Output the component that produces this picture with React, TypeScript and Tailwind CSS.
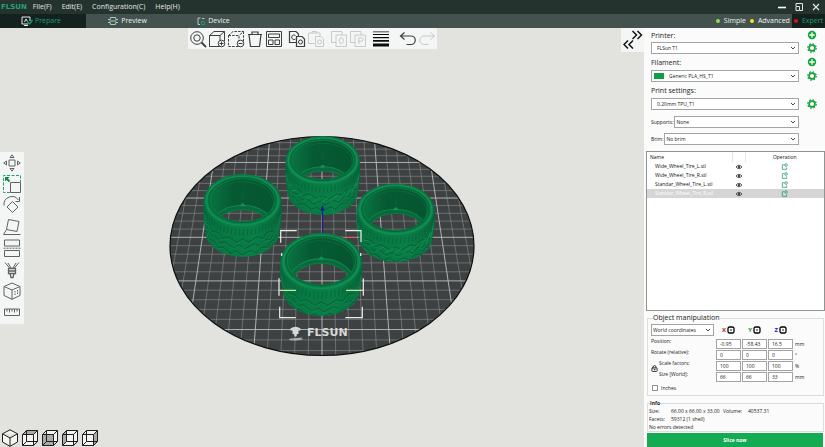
import React, { useState } from "react";
import { LuLockKeyhole } from "react-icons/lu";

type TireProps = {
    id: string;
    cx: number;
    top: number;
    rx: number;
    height: number;
    inner: number;
    holeTop: number;
    slanted?: boolean;
};

type SelectProps = {
    id: string;
    options: string[];
    label?: string;
    className?: string;
    swatch?: boolean;
};

const PLATE = { cx: 322, cy: 246, rx: 152, ry: 109.5 };

// vertical position of a grid row on the tilted bed, n counted in 50 mm steps
const rowY = (n: number) => 1 / (0.0012542 - 0.000065 * n) - 560;
const colX = (n: number, y: number) => PLATE.cx + n * (55.5 + 0.075 * (y - 180));

const gridPath = (bold: boolean) => {
    let d = "";
    for (let i = -15; i <= 15; i++) {
        if ((i % 5 === 0) !== bold) continue;
        const n = i / 5;
        const y = rowY(n).toFixed(2);
        d += `M160 ${y}H485`;
        d += `M${colX(n, 130).toFixed(2)} 130L${colX(n, 360).toFixed(2)} 360`;
    }
    return d;
};

const around = (deg: number, offset: number, ry: number) => {
    const a = (deg * Math.PI) / 180;
    const shrink = 1 - offset * 0.002;
    return `${(39 * shrink * Math.cos(a)).toFixed(2)} ${(ry - 27 + ry * Math.sin(a) + offset).toFixed(2)}`;
};

const sipes = (ry: number) => {
    let d = "";
    for (let a = 4; a <= 176; a += 6) d += `M${around(a, 1, ry)}L${around(a + 1, 7, ry)}`;
    return d;
};

const zigzag = (offset: number, phase: number, ry: number) => {
    let d = "";
    for (let a = 3 + phase, i = 0; a <= 177; a += i % 3 === 0 ? 14 : 9, i++) {
        d += `${i === 0 ? "M" : "L"}${around(a, offset + (i % 2 ? 3 : -0.6), ry)}`;
    }
    return d;
};

const slashes = (offset: number, phase: number, ry: number) => {
    let d = "";
    for (let a = 6 + phase; a <= 165; a += 14) {
        d += `M${around(a, offset, ry)}L${around(a + 5, offset + 2, ry)}L${around(a + 13, offset + 6, ry)}`;
    }
    return d;
};

const Tire = ({ id, cx, top, rx, height, inner, holeTop, slanted }: TireProps) => {
    const sy = height / 81;
    const outer = inner + 6;
    const rimY = outer - 27;
    const innerY = inner - 22;
    const holeRy = inner - 1.5;
    const bottomRy = outer - 2;
    const bottomY = 54 - bottomRy;
    const body = `M-39 ${rimY}A39 ${outer} 0 0 1 39 ${rimY}C39.5 10 39 20 37 ${bottomY}A37 ${bottomRy} 0 0 1 -37 ${bottomY}C-39 20 -39.5 10 -39 ${rimY}Z`;
    return (
        <g transform={`translate(${cx} ${top + 27 * sy}) scale(${rx / 39} ${sy})`}>
            <clipPath id={`${id}-inner`}>
                <ellipse cx="0" cy={innerY} rx="32" ry={inner} />
            </clipPath>
            <clipPath id={`${id}-body`}>
                <path d={body} />
            </clipPath>
            <mask id={`${id}-hole`} maskUnits="userSpaceOnUse" x="-45" y="-35" width="90" height="95">
                <rect x="-45" y="-35" width="90" height="95" fill="white" />
                <ellipse cx="0" cy={holeTop + holeRy} rx="28.5" ry={holeRy} fill="black" clipPath={`url(#${id}-inner)`} />
            </mask>
            <g mask={`url(#${id}-hole)`}>
                <path d={body} fill="url(#tireBody)" />
                <g clipPath={`url(#${id}-body)`} fill="none" strokeLinejoin="round">
                    <path d={sipes(outer)} stroke="#066339" strokeWidth="0.8" />
                    {[11, 17, 23].map((offset, i) => (
                        <g key={offset}>
                            <path d={zigzag(offset, i * 5, outer)} stroke="#066238" strokeWidth="1.1" />
                            <path d={zigzag(offset + 1.2, i * 5, outer)} stroke="#138a52" strokeWidth="0.7" />
                        </g>
                    ))}
                    <path
                        d={slashes(slanted ? 12 : 15, 4, outer)}
                        stroke={slanted ? "#1c945b" : "#0f8049"}
                        strokeWidth="0.8"
                    />
                </g>
                <ellipse cx="0" cy={rimY} rx="37.8" ry={outer - 1} fill="#098247" />
                <ellipse cx="0" cy={rimY - 0.3} rx="36" ry={outer - 2.6} fill="none" stroke="#138f55" strokeWidth="1.4" />
                <ellipse cx="0" cy={innerY} rx="33.6" ry={inner + 1.4} fill="none" stroke="#07663a" strokeWidth="1.4" />
                <ellipse cx="0" cy={innerY} rx="32" ry={inner} fill="url(#tireInner)" />
                <g clipPath={`url(#${id}-inner)`} fill="none">
                    <ellipse cx="0" cy={innerY + 2.5} rx="31" ry={inner} stroke="#0b7040" strokeWidth="0.8" />
                    <ellipse cx="0" cy={holeTop + holeRy - 3.5} rx="30.5" ry={holeRy + 1.5} fill="#086a3b" stroke="#128650" strokeWidth="1" />
                    <ellipse cx="0" cy={holeTop + holeRy} rx="29" ry={holeRy + 0.5} stroke="#0a7a44" strokeWidth="1.2" />
                    <path d="M-2.6 0L-1 -2.8H1.2L2.6 0Z" fill="#159056" transform={`translate(0 ${holeTop - 4})`} />
                    <path d="M0.5 -12V-3" stroke="#0a6c3d" strokeWidth="0.7" />
                </g>
            </g>
        </g>
    );
};

const Scene = () => (
    <svg viewBox="0 28 644 419" className="absolute inset-0 h-full w-full" aria-label="Build plate">
        <defs>
            <linearGradient id="tireBody" x1="0" x2="1" y1="0" y2="0">
                <stop offset="0" stopColor="#067040" />
                <stop offset="0.35" stopColor="#087a44" />
                <stop offset="0.65" stopColor="#0a7e47" />
                <stop offset="1" stopColor="#07693b" />
            </linearGradient>
            <linearGradient id="tireInner" x1="0" x2="1" y1="0" y2="0">
                <stop offset="0" stopColor="#087341" />
                <stop offset="0.35" stopColor="#065a33" />
                <stop offset="1" stopColor="#055630" />
            </linearGradient>
            <clipPath id="plate">
                <ellipse {...PLATE} />
            </clipPath>
        </defs>
        <ellipse {...PLATE} fill="#3e4141" />
        <g clipPath="url(#plate)" fill="none">
            <path d={gridPath(false)} stroke="#8b8e8e" strokeWidth="0.6" />
            <path d={gridPath(true)} stroke="#bcbebe" strokeWidth="0.9" />
        </g>
        <ellipse {...PLATE} fill="none" stroke="#0c0e0e" strokeWidth="1.2" />

        <g fill="#d5d8d7">
            <path d="M290.500 328.500Q295.500 325 300.500 328.500V330.500H298.500V334H297L296.500 336.500H294.500L294 334H292.500V330.500H290.500Z" />
            <path d="M289 338.800L303 337.600L301 339.300L304 339.600L296 340.600L290 340.200Z" opacity="0.7" />
            <text x="307" y="336" fontSize="11" fontWeight="bold" fontFamily="DejaVu Sans, sans-serif">
                FLSUN
            </text>
        </g>

        <Tire id="top" cx={322.7} top={136} rx={37.2} height={79} inner={19.5} holeTop={9.5} slanted />
        <Tire id="left" cx={242.5} top={174} rx={39} height={83} inner={20.5} holeTop={8.5} />
        <path d="M343 236.800H357" stroke="#b3262b" strokeWidth="1" />
        <Tire id="right" cx={395.7} top={183.5} rx={39} height={78.5} inner={21.5} holeTop={4.5} slanted />
        <path d="M322.500 237V208" stroke="#1a1a94" strokeWidth="1.2" />
        <path d="M322.500 205L320.500 210.500H324.500Z" fill="#1a1a94" />
        <Tire id="front" cx={321.3} top={233} rx={41} height={83} inner={22.5} holeTop={3} />

        <g fill="none" stroke="#eceeed" strokeWidth="1.2">
            <path d="M280.700 242.700V230.700H296.700M345.300 230.700H361V242" />
            <path d="M279 278.300V295.700M363.300 278.300V295.700" />
            <path d="M279.700 306.700V317.700H295.700M345.300 317.700H362.300V306.700" />
            <path d="M281.700 253V256M360.700 253V256" />
            <path d="M279 290.300H296M346 290.300H363.300" stroke="#c9e3a0" />
        </g>
    </svg>
);

const glyph = (children: React.ReactNode, size = "h-[18px] w-[18px]") => (
    <svg viewBox="0 0 18 18" className={size} fill="none" stroke="currentColor" strokeWidth="1" aria-hidden="true">
        {children}
    </svg>
);

const CUBE = "M1.500 5.500H12V16.500H1.500ZM1.500 5.500L6 1.500H16.500L12 5.500M16.500 1.500V11";

const toolGroups = [
    [
        {
            label: "Zoom",
            icon: glyph(
                <>
                    <circle cx="8" cy="8" r="6.300" />
                    <circle cx="8" cy="8" r="3.200" />
                    <path d="M12.500 12.500L17 17" strokeWidth="1.800" />
                </>
            ),
        },
        {
            label: "Add",
            icon: glyph(
                <>
                    <path d={CUBE} />
                    <circle cx="13.500" cy="13.500" r="3.300" fill="#f3f6f4" />
                    <path d="M11.500 13.500H15.500M13.500 11.500V15.500" />
                </>
            ),
        },
        {
            label: "Remove",
            icon: glyph(
                <>
                    <path d={CUBE} strokeDasharray="2.500 1.200" />
                    <circle cx="13.500" cy="13.500" r="3.300" fill="#f3f6f4" />
                    <path d="M11.500 13.500H15.500" />
                </>
            ),
        },
        {
            label: "Delete all",
            icon: glyph(<path d="M2 4.500H16M6 4.500V2H12V4.500M3 4.500L4.500 16.500H13.500L15 4.500" strokeWidth="1.200" />),
        },
        {
            label: "Arrange",
            icon: glyph(
                <>
                    <path d="M1.500 1.500H16.500V16.500H1.500Z" />
                    <path d="M3.500 4H14.500V7.500H3.500ZM3.500 10H8V14.500H3.500ZM10 10H14.500V14.500H10Z" />
                </>
            ),
        },
    ],
    [
        {
            label: "Copy",
            icon: glyph(
                <>
                    <path d="M9 12.500H1.500V1.500H8L10.500 4V6.500M8.500 6.500H14L16.500 9V16.500H8.500Z" strokeWidth="1.200" />
                    <path d="M7.500 5.500A2.300 2.300 0 1 0 7.500 9" />
                    <circle cx="12.500" cy="12" r="2" />
                </>
            ),
        },
        {
            label: "Paste",
            off: true,
            icon: glyph(
                <>
                    <path d="M7.500 13.500H1.500V3H13V6M5 3V1.500H9.500V3M8.500 6.500H14L16.500 9V16.500H8.500Z" />
                    <circle cx="12.500" cy="12" r="2" />
                </>
            ),
        },
    ],
    [
        {
            label: "Split to objects",
            off: true,
            icon: glyph(
                <>
                    <path d="M6 12.500H1.500V1.500H12V5M6 5H16.500V16.500H6Z" />
                    <ellipse cx="11.300" cy="10.700" rx="2" ry="3" />
                </>
            ),
        },
        {
            label: "Split to parts",
            off: true,
            icon: glyph(
                <>
                    <path d="M6 12.500H1.500V1.500H12V5M6 5H16.500V16.500H6Z" />
                    <path d="M9.800 14V7.800H12.500A1.700 1.700 0 0 1 12.500 11.200H9.800" />
                </>
            ),
        },
    ],
    [
        {
            label: "Variable layer height",
            icon: glyph(
                <g stroke="none" fill="#0b0d0c">
                    <path d="M1 1.500H17V2.200H1ZM1 4H17V5H1ZM1 7H17V8.300H1ZM1 10H17V11.800H1ZM1 13.500H17V16.500H1Z" />
                </g>
            ),
        },
    ],
    [
        {
            label: "Undo",
            icon: glyph(<path d="M5.500 2.500L1.500 6L5.500 9.500M1.500 6H12A4 4 0 0 1 12 14.500H7.500" strokeWidth="1.200" />),
        },
        {
            label: "Redo",
            off: true,
            icon: glyph(<path d="M12.500 2.500L16.500 6L12.500 9.500M16.500 6H6A4 4 0 0 0 6 14.500H10.500" />),
        },
    ],
];

const gizmos = [
    {
        label: "Move",
        icon: glyph(<path d="M6 6H12V12H6ZM9 0.800L11 3.500H7ZM9 17.200L11 14.500H7ZM0.800 9L3.500 7V11ZM17.200 9L14.500 7V11Z" />),
    },
    {
        label: "Scale",
        icon: glyph(
            <>
                <path d="M7 17.500H0.500V0.500H17.500V7" stroke="#22a06a" strokeDasharray="3 1.500" />
                <path d="M7.500 7.500H17.500V17.500H7.500Z" />
                <path d="M3 3L6.500 6.500" stroke="#0b8a4a" strokeWidth="2" />
                <path d="M2 2H6.500L2 6.500Z" fill="#0b8a4a" stroke="none" />
            </>
        ),
    },
    {
        label: "Rotate",
        icon: glyph(<path d="M9.500 5.500L15 11L9.500 16.500L4 11ZM1 9.500A8 8 0 0 1 15.500 4M16.500 1V5.500H12.500" />),
    },
    {
        label: "Place on face",
        icon: glyph(<path d="M5.500 1.500L16 3.500L14 13.500L3.500 11.500ZM0.500 16.500H17.500M3.500 11.500L0.500 16.500" />),
    },
    {
        label: "Cut",
        icon: glyph(
            <>
                <path d="M1.500 1H16.500V7H1.500ZM1.500 11.500H16.500V17.500H1.500Z" />
                <path d="M0.500 9.200H17.500" strokeDasharray="2 1" />
            </>
        ),
    },
    {
        label: "Paint supports",
        icon: glyph(
            <>
                <path d="M2 1.500L7 7.500M16 1.500L11 7.500M5 2L8 7M13 2L10 7" />
                <path d="M5.500 7.500H12.500V12.500H5.500ZM7 12.500L8 16.500H10L11 12.500M5.500 10H12.500" strokeWidth="1.300" />
            </>
        ),
    },
    {
        label: "Seam",
        icon: glyph(
            <>
                <path d="M9 1L17 4.500V13.500L9 17.300L1 13.500V4.500ZM1 4.500L9 8L17 4.500M9 8V17.300" />
                <path d="M12 9V14M14.500 8V12" strokeDasharray="1.500 1" />
            </>
        ),
    },
    {
        label: "Measure",
        icon: glyph(<path d="M1.500 6H16.500V12.500H1.500ZM4 6V8.500M6.500 6V9.500M9 6V8.500M11.500 6V9.500M14 6V8.500" />),
    },
];

const BOX = "M1.500 5.500H12.500V16.500H1.500ZM5.500 1.500H16.500V12.500H5.500ZM1.500 5.500L5.500 1.500M12.500 5.500L16.500 1.500M12.500 16.500L16.500 12.500M1.500 16.500L5.500 12.500";

const views = [
    { label: "Isometric view", face: "", lines: "M9 0.800L16.500 4.800V13L9 17.300L1.500 13V4.800ZM1.500 4.800L9 9L16.500 4.800M9 9V17.300" },
    { label: "Top view", face: "M1.500 5.500L5.500 1.500H16.500L12.500 5.500Z", lines: BOX },
    { label: "Front view", face: "M1.500 5.500H12.500V16.500H1.500Z", lines: BOX },
    { label: "Left view", face: "M1.500 5.500L5.500 1.500V12.500L1.500 16.500Z", lines: BOX },
    { label: "Right view", face: "M12.500 5.500L16.500 1.500V12.500L12.500 16.500Z", lines: BOX },
];

const GearButton = ({ label }: { label: string }) => (
    <button aria-label={label} className="text-[#12a33c]">
        <svg viewBox="0 0 10 10" className="h-[10px] w-[10px]" fill="none" stroke="currentColor" aria-hidden="true">
            <circle cx="5" cy="5" r="2.900" strokeWidth="1.600" />
            <circle cx="5" cy="5" r="4.200" strokeWidth="1.300" strokeDasharray="1.650 1.650" />
        </svg>
    </button>
);

const PlusButton = ({ label }: { label: string }) => (
    <button aria-label={label} className="text-[#12a33c]">
        <svg viewBox="0 0 10 10" className="h-[10px] w-[10px]" aria-hidden="true">
            <circle cx="5" cy="5" r="4.200" fill="currentColor" />
            <path d="M5 2.300V7.700M2.300 5H7.700" fill="none" stroke="white" strokeWidth="1.300" />
        </svg>
    </button>
);

const Select = ({ id, options, label, className = "", swatch }: SelectProps) => (
    <div className={`relative flex h-3 min-w-0 items-center border border-[#a3a5a4] bg-white ${className}`}>
        {swatch && <span className="ml-[2px] h-[6px] w-[10px] shrink-0 bg-[#0e9f45]" />}
        <select id={id} aria-label={label} className="h-full w-full appearance-none bg-transparent pl-[5px] text-[5px] leading-none text-[#222] outline-none">
            {options.map((option) => (
                <option key={option}>{option}</option>
            ))}
        </select>
        <svg viewBox="0 0 6 4" className="pointer-events-none absolute right-[2px] h-1 w-[6px]" fill="none" stroke="#333" strokeWidth="0.900">
            <path d="M1 1L3 3L5 1" />
        </svg>
    </div>
);

const menus = ["File(F)", "Edit(E)", "Configuration(C)", "Help(H)"];

const TitleBar = () => (
    <header className="flex h-[14px] shrink-0 items-center bg-[#25332f] pl-[1px] text-[7px] text-[#e4e8e6]">
        <span className="font-['DejaVu_Sans',sans-serif] font-bold text-[#24a173]">FLSUN</span>
        <nav className="ml-[6px] flex gap-[10px]">
            {menus.map((menu) => (
                <button key={menu}>{menu}</button>
            ))}
        </nav>
        <div className="ml-auto flex gap-[7px] pr-1">
            <button aria-label="Minimize">
                <svg viewBox="0 0 10 10" className="h-[10px] w-[10px]" stroke="white" strokeWidth="1.600"><path d="M1 5.500H9" /></svg>
            </button>
            <button aria-label="Restore">
                <svg viewBox="0 0 10 10" className="h-[10px] w-[10px]" fill="none" stroke="#e4e8e6"><path d="M2 4V1.500H8.500V8.500H6M2 4.500H5.500V8.500H2Z" /></svg>
            </button>
            <button aria-label="Close">
                <svg viewBox="0 0 10 10" className="h-[10px] w-[10px]" stroke="#e4e8e6" strokeWidth="1.200"><path d="M2 2L8 8M8 2L2 8" /></svg>
            </button>
        </div>
    </header>
);

const tabs = [
    {
        name: "Prepare",
        icon: (
            <svg viewBox="0 0 12 10" className="h-[10px] w-3" fill="none" stroke="#e4e8e6" aria-hidden="true">
                <path d="M9 5V1H1V8H7M3 9.500H7M3.500 6L5 3L6.500 5.500" />
                <path d="M6.500 6L8.500 8L11.500 4" stroke="#12a36b" strokeWidth="1.300" />
            </svg>
        ),
    },
    {
        name: "Preview",
        icon: (
            <svg viewBox="0 0 12 10" className="h-[10px] w-3" fill="none" stroke="#a9c9bd" aria-hidden="true">
                <path d="M3 4L3.500 1.500H8.500L9 4M1 3.500H3M9 3.500H11M2.500 5H9.500M1 6.500H3M9 6.500H11M3 6L3.500 8.500H8.500L9 6" />
            </svg>
        ),
    },
    {
        name: "Device",
        icon: (
            <svg viewBox="0 0 10 10" className="h-[10px] w-[10px]" fill="none" stroke="#b9c4c0" aria-hidden="true">
                <path d="M2 2H4.500M2 2V8.500H4M6 2.500H8.500" />
                <path d="M5.500 5.500H8.500V8.500H5.500Z" stroke="#109a72" />
            </svg>
        ),
    },
];

const modes = [
    { name: "Simple", dot: "bg-[#8be04e]" },
    { name: "Advanced", dot: "bg-[#f4e21c]" },
    { name: "Expert", dot: "bg-[#d31525]" },
];

const TabBar = () => {
    const [tab, setTab] = useState<string>("Prepare");
    const [mode, setMode] = useState<string>("Expert");
    return (
        <div className="flex h-[14px] shrink-0 bg-[#43524e] text-[7px] text-[#eef2f0]">
            {tabs.map(({ name, icon }) => (
                <button
                    key={name}
                    onClick={() => setTab(name)}
                    className={`flex w-[86px] items-center justify-center gap-[2px] pr-1 ${tab === name ? "bg-[#14211e] text-[#17a06c]" : ""}`}
                >
                    {icon}
                    {name}
                </button>
            ))}
            <div className="ml-auto flex">
                {modes.map(({ name, dot }) => (
                    <button
                        key={name}
                        onClick={() => setMode(name)}
                        className={`flex items-center gap-1 px-[2px] ${mode === name ? "bg-[#14211e] text-[#17a06c]" : ""}`}
                    >
                        <span className={`h-1 w-1 rounded-full ${dot}`} />
                        {name}
                    </button>
                ))}
            </div>
        </div>
    );
};

const Viewport = () => (
    <main className="relative flex min-w-0 flex-1 flex-col bg-[#e2e3de]">
        <Scene />
        <div className="absolute inset-x-0 top-0 flex justify-center pr-5">
            <div className="flex h-[21px] items-center gap-[5px] bg-[#f3f6f4] px-[1px]">
                {toolGroups.map((group, i) => (
                    <div key={i} className={`flex gap-[1px] ${i === toolGroups.length - 1 ? "pl-1" : ""}`}>
                        {group.map((tool) => (
                            <button key={tool.label} aria-label={tool.label} className={tool.off ? "text-[#c6cac8]" : "text-[#3b403e]"}>
                                {tool.icon}
                            </button>
                        ))}
                    </div>
                ))}
            </div>
        </div>
        <button aria-label="Collapse sidebar" className="absolute top-0 right-0 h-6 w-[23px] bg-[#f3f6f4]">
            <svg viewBox="0 0 23 24" className="h-6 w-[23px]" fill="none" stroke="#0b0d0c" strokeWidth="1.400" aria-hidden="true">
                <path d="M11.500 3L15.500 7L11.500 11M16.500 3L20.500 7L16.500 11M7 12.500L3 16.500L7 20.500M12 12.500L8 16.500L12 20.500" />
            </svg>
        </button>
        <div className="absolute inset-y-0 left-0 flex items-center">
            <div className="flex h-[172px] w-6 flex-col items-center justify-between bg-[#f3f6f4] py-[1px] text-[#5f6462]">
                {gizmos.map((gizmo) => (
                    <button key={gizmo.label} aria-label={gizmo.label} className="flex h-5 items-center">
                        {gizmo.icon}
                    </button>
                ))}
            </div>
        </div>
        <div className="absolute bottom-0 left-0 flex gap-[2px] pl-[1px]">
            {views.map((view) => (
                <button key={view.label} aria-label={view.label} className="text-[#1c1f1e]">
                    {glyph(
                        <>
                            <path d={view.lines} fill="#f4f5f1" stroke="none" />
                            {view.face && <path d={view.face} fill="#a9acaa" stroke="none" />}
                            <path d={view.lines} />
                        </>
                    )}
                </button>
            ))}
        </div>
    </main>
);

const presets = [
    { id: "printer", label: "Printer:", value: "FLSun T1", add: true },
    { id: "filament", label: "Filament:", value: "Generic PLA_HS_T1", add: true, swatch: true },
    { id: "print", label: "Print settings:", value: "0.20mm TPU_T1", add: false },
];

const files = ["Wide_Wheel_Tire_L.stl", "Wide_Wheel_Tire_R.stl", "Standar_Wheel_Tire_L.stl", "Standar_Wheel_Tire_R.stl"];

const ObjectList = () => {
    const [selected, setSelected] = useState<string>(files[3]);
    return (
        <div className="mt-[6px] ml-[2px] min-h-0 flex-1 border border-[#8f9391] bg-white">
            <table className="w-full table-fixed border-collapse text-[5px] leading-none text-[#111]">
                <thead>
                    <tr className="h-[10px]">
                        <th className="w-[85px] pl-[3px] text-left font-normal">Name</th>
                        <th className="w-[13px] border-x border-[#e3e5e4]" aria-label="Visible" />
                        <th className="font-normal">Operation</th>
                    </tr>
                </thead>
                <tbody>
                    {files.map((file) => (
                        <tr
                            key={file}
                            onClick={() => setSelected(file)}
                            className={selected === file ? "bg-[#d5d5d5] text-white" : ""}
                        >
                            <td className="h-[9px] pl-2">{file}</td>
                            <td className="p-0">
                                <svg viewBox="0 0 8 6" className="mx-auto h-[6px] w-2" fill="none" stroke="#333" strokeWidth="0.800">
                                    <path d="M1 3Q4 -0.500 7 3Q4 6.500 1 3Z" />
                                    <circle cx="4" cy="3" r="0.900" fill="#333" />
                                </svg>
                            </td>
                            <td className="p-0">
                                <svg viewBox="0 0 8 8" className="mx-auto h-[7px] w-[7px]" fill="none" stroke="#2b9c74" strokeWidth="0.900">
                                    <path d="M4 2H1.500V7.200H6.500V5" />
                                    <circle cx="5.800" cy="2.300" r="1.500" />
                                </svg>
                            </td>
                        </tr>
                    ))}
                </tbody>
            </table>
        </div>
    );
};

const axes = [
    { name: "X", color: "text-[#c01818]" },
    { name: "Y", color: "text-[#1c9a1c]" },
    { name: "Z", color: "text-[#1a1aa8]" },
];

const transforms = [
    { label: "Position:", values: ["-0.95", "-58.43", "16.5"], unit: "mm" },
    { label: "Rotate (relative):", values: ["0", "0", "0"], unit: "°" },
    { label: "Scale factors:", values: ["100", "100", "100"], unit: "%", nested: true },
    { label: "Size [World]:", values: ["66", "66", "33"], unit: "mm", nested: true },
];

const Manipulation = () => (
    <fieldset className="mt-[3px] mr-[1px] ml-[3px] border border-[#dcdedd] px-[3px] pb-1">
        <legend className="ml-[2px] text-[7px] leading-[8px]">Object manipulation</legend>
        <div className="mt-[2px] grid grid-cols-[1fr_25px_25px_25px_26px] items-center gap-x-[1px]">
            <Select id="coords" label="Coordinate system" options={["World coordinates"]} className="mr-[1px] [&>select]:pl-[1px]" />
            {axes.map((axis) => (
                <button key={axis.name} className="flex items-center justify-end gap-[1px] pr-[6px]">
                    <span className={`text-[6px] leading-none font-bold ${axis.color}`}>{axis.name}</span>
                    <svg viewBox="0 0 8 8" className="h-2 w-2" fill="none" stroke="#000" aria-hidden="true">
                        <rect x="1" y="1" width="6" height="6" rx="1.500" strokeWidth="1.300" />
                        <circle cx="4" cy="4" r="0.800" fill="#000" stroke="none" />
                    </svg>
                </button>
            ))}
        </div>
        <div className="relative mt-[3px] flex flex-col gap-[1px]">
            {transforms.map((row) => (
                <div key={row.label} className="grid h-[10px] grid-cols-[1fr_25px_25px_25px_26px] items-center gap-x-[1px]">
                    <span className={row.nested ? "self-start pl-2" : "self-start"}>{row.label}</span>
                    {row.values.map((value, i) => (
                        <input
                            key={i}
                            aria-label={`${row.label} ${axes[i].name}`}
                            defaultValue={value}
                            className="h-[10px] w-full border border-[#a3a5a4] bg-white pl-[3px] text-[5px] leading-none outline-none"
                        />
                    ))}
                    <span className="pl-[1px]">{row.unit}</span>
                </div>
            ))}
            <button aria-label="Lock proportions" className="absolute bottom-[10px] left-0">
                <LuLockKeyhole className="h-[7px] w-[7px]" strokeWidth={3} />
            </button>
        </div>
        <label className="mt-[3px] ml-[1px] flex h-[6px] items-center gap-[3px]">
            <input type="checkbox" className="h-[6px] w-[6px] appearance-none border border-[#8f9391] bg-white checked:bg-[#12a850]" />
            Inches
        </label>
    </fieldset>
);

const Info = () => (
    <fieldset className="mt-[3px] mr-[1px] ml-[3px] border border-[#dcdedd] px-[1px] leading-[8px]">
        <legend className="ml-[1px] font-bold">Info</legend>
        <div className="flex">
            <span className="w-[22px]">Size:</span>
            <span className="w-[52px]">66.00 x 66.00 x 33.00</span>
            <span className="w-[25px]">Volume:</span>
            <span>40537.31</span>
        </div>
        <div className="flex">
            <span className="w-[22px]">Facets:</span>
            <span>59312 (1 shell)</span>
        </div>
        <p>No errors detected</p>
    </fieldset>
);

const Sidebar = () => (
    <aside className="flex w-[181px] shrink-0 flex-col bg-[#fafbfa] text-[5px] leading-none text-[#222]">
        <div className="flex flex-col pr-2 pl-[7px]">
            {presets.map((preset, i) => (
                <div key={preset.id}>
                    <div className={`flex items-center justify-between text-[7px] ${i === 0 ? "h-[14px]" : "h-4"}`}>
                        <label htmlFor={preset.id}>{preset.label}</label>
                        {preset.add && <PlusButton label={`Add ${preset.id}`} />}
                    </div>
                    <div className="flex h-3 items-center justify-between gap-2">
                        <Select id={preset.id} options={[preset.value]} swatch={preset.swatch} className="flex-1" />
                        <GearButton label={`Edit ${preset.id}`} />
                    </div>
                </div>
            ))}
            <div className="mt-[6px] mr-[18px] flex items-center gap-[1px]">
                <label htmlFor="supports">Supports:</label>
                <Select id="supports" options={["None"]} className="flex-1 [&>select]:pl-[1px]" />
            </div>
            <div className="mt-[5px] mr-[18px] flex items-center gap-[1px]">
                <label htmlFor="brim">Brim:</label>
                <Select id="brim" options={["No brim"]} className="flex-1 [&>select]:pl-[1px]" />
            </div>
        </div>
        <ObjectList />
        <Manipulation />
        <Info />
        <button className="mt-[1px] mr-[2px] ml-[3px] h-[14px] bg-[#14ab52] text-[5px] font-bold text-white">Slice now</button>
    </aside>
);

const App = () => {
    return (
        <div className="flex h-screen flex-col overflow-hidden font-['Open_Sans','Noto_Sans',sans-serif]">
            <TitleBar />
            <TabBar />
            <div className="flex min-h-0 flex-1">
                <Viewport />
                <Sidebar />
            </div>
        </div>
    );
};

export default App;
